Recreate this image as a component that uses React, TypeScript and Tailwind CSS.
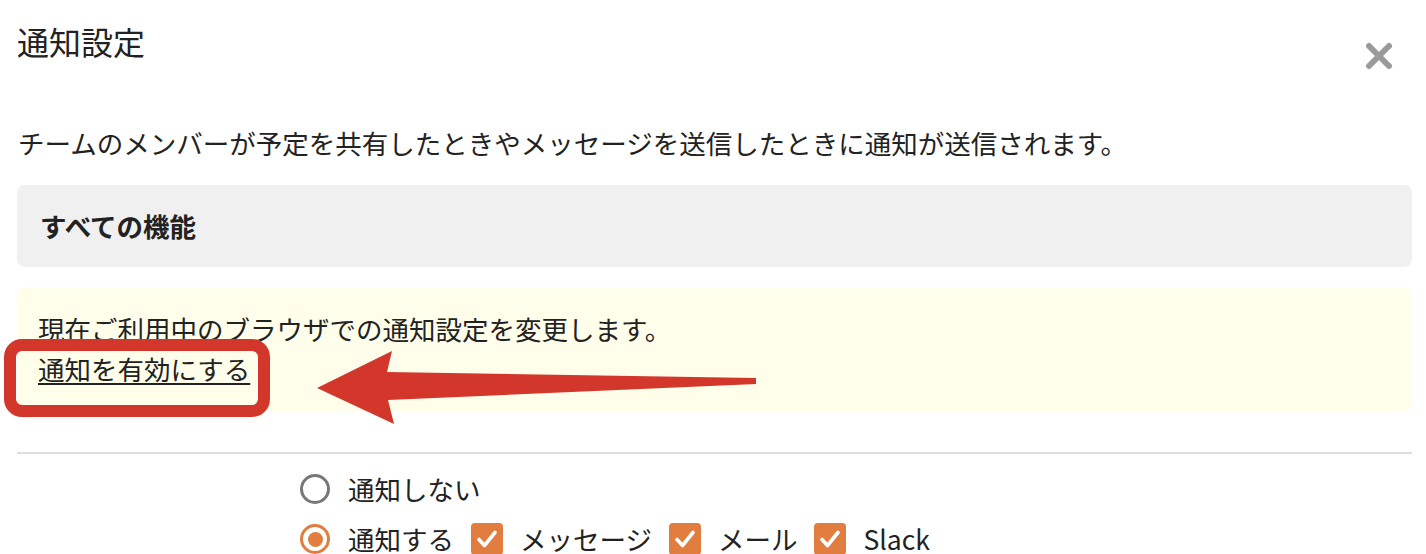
import React from "react";

const font = { fontFamily: '"Noto Sans CJK JP", "Noto Sans", sans-serif' };

function Checkbox() {
  return (
    <span className="flex h-[32px] w-[32px] shrink-0 items-center justify-center rounded-[4px] bg-[#e07d3f]">
      <svg width="24" height="24" viewBox="0 0 24 24" fill="none">
        <path d="M4 12.5 L9.5 18.5 L20 5.5" stroke="#fff" strokeWidth="3.6" strokeLinecap="round" strokeLinejoin="round" />
      </svg>
    </span>
  );
}

export default function App() {
  return (
    <div className="relative h-[554px] w-[1426px] overflow-hidden bg-white text-[#222]" style={font}>
      <div className="flex flex-col pl-[17px] pr-[14px]">
        <div className="flex h-[67px] items-start justify-between pt-[17px]">
          <h1 className="text-[32px] leading-[48px] font-normal">通知設定</h1>
          <button className="mr-[19px] mt-[25px] flex h-[28px] w-[28px] items-center justify-center">
            <svg width="28" height="28" viewBox="0 0 28 28">
              <path d="M4 4 L24 24 M24 4 L4 24" stroke="#9a9a9a" strokeWidth="6" strokeLinecap="round" />
            </svg>
          </button>
        </div>
        <p className="mt-[56px] pl-[1px] text-[26.5px] leading-[40px] text-[#222]">
          チームのメンバーが予定を共有したときやメッセージを送信したときに通知が送信されます。
        </p>
        <div className="mt-[22px] flex h-[82px] items-center rounded-[8px] bg-[#f0f0f0] pl-[23px]">
          <span className="text-[26.5px] font-bold leading-[40px]">すべての機能</span>
        </div>
        <div className="mt-[20px] h-[124px] rounded-[8px] bg-[#fffeea] pl-[21px] pt-[22px]">
          <p className="text-[26.5px] leading-[40px]">現在ご利用中のブラウザでの通知設定を変更します。</p>
          <a className="text-[26.5px] leading-[40px] underline decoration-[2px] underline-offset-[3px]">通知を有効にする</a>
        </div>
        <div className="mt-[41px] h-[2px] bg-[#dddddd]" />
        <div className="flex flex-col pl-[283px] pt-[10px] text-[26.5px] leading-[40px]">
          <div className="flex h-[50px] items-center gap-[18px]">
            <span className="h-[30px] w-[30px] shrink-0 rounded-full border-[3px] border-[#777]" />
            <span>通知しない</span>
          </div>
          <div className="flex h-[50px] items-center gap-[17px]">
            <span className="flex h-[30px] w-[30px] shrink-0 items-center justify-center rounded-full border-[3px] border-[#e07d3f]">
              <span className="h-[15px] w-[15px] rounded-full bg-[#e07d3f]" />
            </span>
            <span className="ml-[1px]">通知する</span>
            <Checkbox />
            <span>メッセージ</span>
            <Checkbox />
            <span>メール</span>
            <Checkbox />
            <span>Slack</span>
          </div>
        </div>
      </div>
      <svg className="pointer-events-none absolute left-0 top-0" width="1426" height="554" viewBox="0 0 1426 554">
        <rect x="10" y="345" width="254" height="66" rx="12" fill="none" stroke="#d3362a" strokeWidth="12" />
        <polygon
          points="317,388 392,351 387,372 756,378 756,384 388,400 394,424"
          fill="#d3362a"
        />
      </svg>
    </div>
  );
}
